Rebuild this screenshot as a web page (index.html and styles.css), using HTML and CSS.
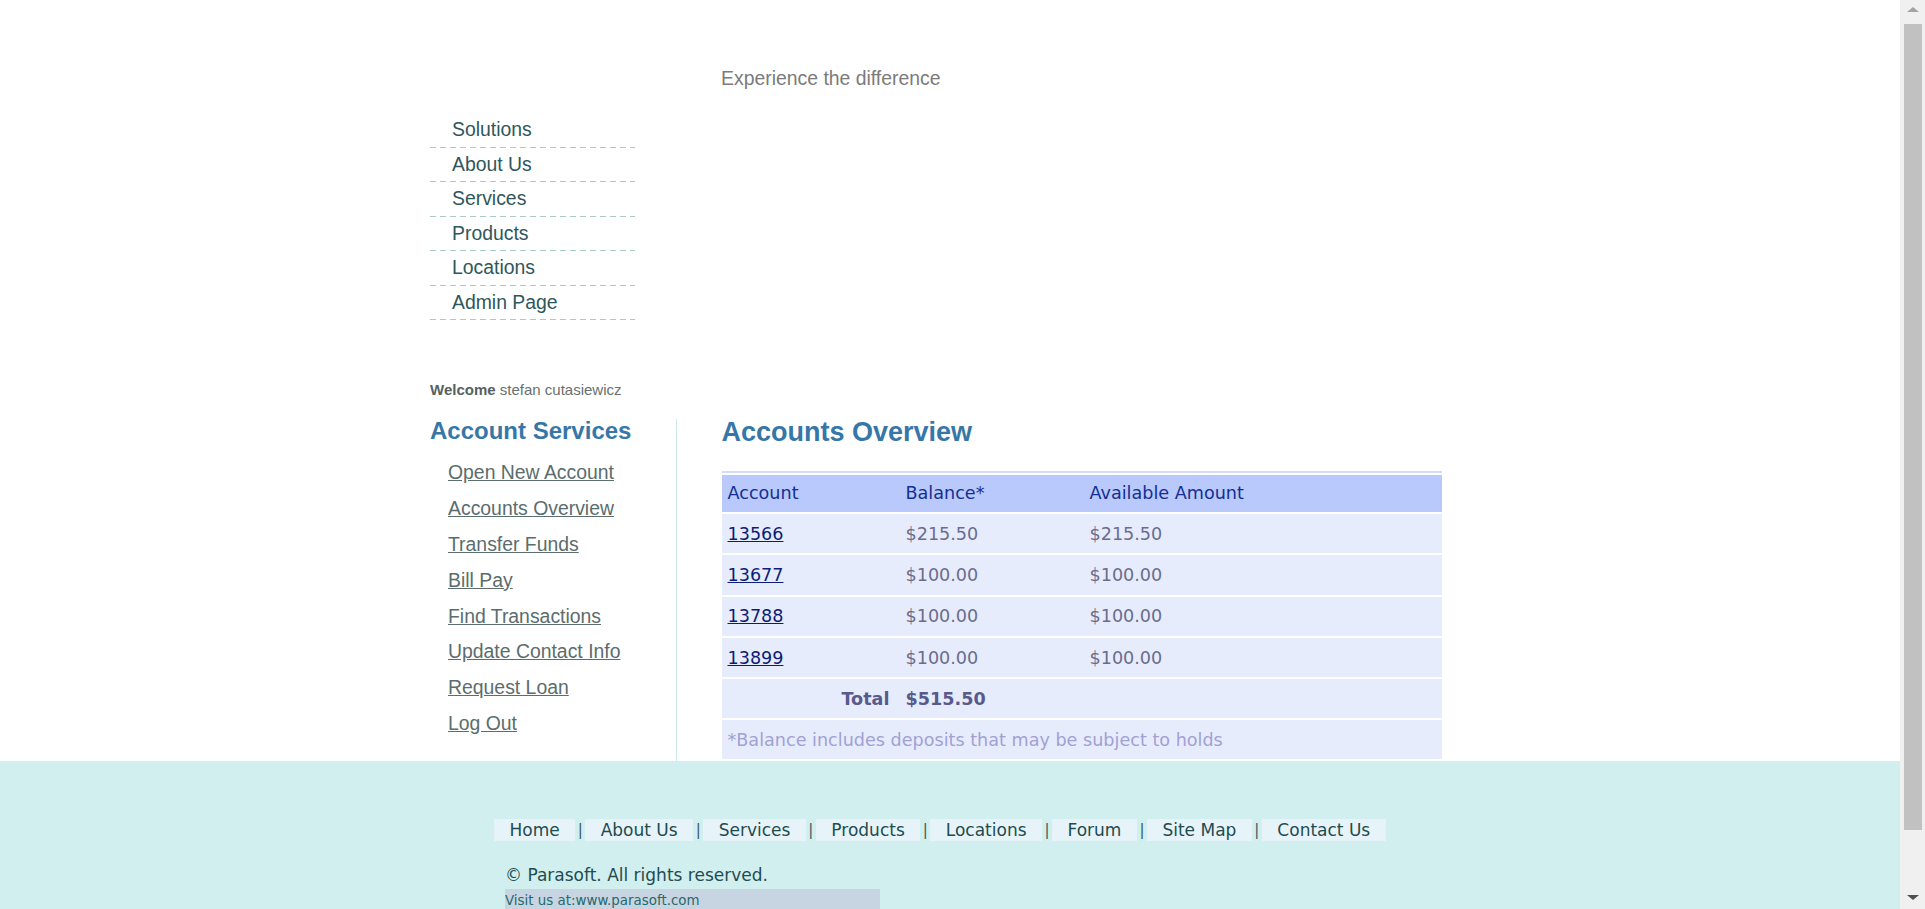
FILE: index.html
```html
<!DOCTYPE html>
<html>
<head>
<meta charset="utf-8">
<title>ParaBank | Accounts Overview</title>
<link rel="stylesheet" href="styles.css">
</head>
<body>
<div class="page">
  <div class="header">
    <p class="caption">Experience the difference</p>
  </div>
  <ul class="topnav">
    <li><a href="#">Solutions</a></li>
    <li><a href="#">About Us</a></li>
    <li><a href="#">Services</a></li>
    <li><a href="#">Products</a></li>
    <li><a href="#">Locations</a></li>
    <li><a href="#">Admin Page</a></li>
  </ul>
  <p class="welcome"><b>Welcome</b> stefan cutasiewicz</p>
  <div class="columns">
    <div class="leftcol">
      <h2 class="services-title">Account Services</h2>
      <ul class="services">
        <li><a href="#">Open New Account</a></li>
        <li><a href="#">Accounts Overview</a></li>
        <li><a href="#">Transfer Funds</a></li>
        <li><a href="#">Bill Pay</a></li>
        <li><a href="#">Find Transactions</a></li>
        <li><a href="#">Update Contact Info</a></li>
        <li><a href="#">Request Loan</a></li>
        <li><a href="#">Log Out</a></li>
      </ul>
    </div>
    <div class="rightcol">
      <h1 class="title">Accounts Overview</h1>
      <table class="accounts">
        <thead>
          <tr><th class="c1">Account</th><th class="c2">Balance*</th><th class="c3">Available Amount</th></tr>
        </thead>
        <tbody>
          <tr><td><a href="#">13566</a></td><td>$215.50</td><td>$215.50</td></tr>
          <tr><td><a href="#">13677</a></td><td>$100.00</td><td>$100.00</td></tr>
          <tr><td><a href="#">13788</a></td><td>$100.00</td><td>$100.00</td></tr>
          <tr><td><a href="#">13899</a></td><td>$100.00</td><td>$100.00</td></tr>
          <tr class="total"><td class="total-label">Total</td><td>$515.50</td><td></td></tr>
        </tbody>
        <tfoot>
          <tr><td colspan="3" class="note">*Balance includes deposits that may be subject to holds</td></tr>
        </tfoot>
      </table>
    </div>
  </div>
</div>
<div class="footer">
  <div class="footer-inner">
    <ul class="footer-links">
      <li><a href="#">Home</a></li><li class="sep">|</li>
      <li><a href="#">About Us</a></li><li class="sep">|</li>
      <li><a href="#">Services</a></li><li class="sep">|</li>
      <li><a href="#">Products</a></li><li class="sep">|</li>
      <li><a href="#">Locations</a></li><li class="sep">|</li>
      <li><a href="#">Forum</a></li><li class="sep">|</li>
      <li><a href="#">Site Map</a></li><li class="sep">|</li>
      <li><a href="#">Contact Us</a></li>
    </ul>
    <p class="copyright">© Parasoft. All rights reserved.</p>
    <p class="visit">Visit us at:www.parasoft.com</p>
  </div>
</div>
<div class="scrollbar" aria-hidden="true">
  <span class="arrow-up"></span>
  <span class="thumb"></span>
  <span class="arrow-down"></span>
</div>
</body>
</html>
```

FILE: styles.css
```css
html, body {
  margin: 0;
  padding: 0;
}
body {
  padding-right: 25px;
  font-family: "Liberation Sans", Arial, sans-serif;
  font-size: 19.4px;
  color: #333;
  background: #fff;
}
.page {
  width: 1040px;
  margin: 0 auto;
}
.header {
  height: 113px;
}
.caption {
  margin: 0;
  padding: 67px 0 0 291px;
  line-height: 23px;
  color: #7b7b7b;
}
.topnav {
  list-style: none;
  margin: 0;
  padding: 0;
  width: 205px;
}
.topnav li {
  height: 34.5px;
  line-height: 32px;
  padding-left: 22px;
  box-sizing: border-box;
  background: repeating-linear-gradient(to right, #a9cbc7 0 6px, transparent 6px 10px) left bottom / 100% 1px no-repeat;
}
.topnav a {
  color: #2f575b;
  text-decoration: none;
}
.welcome {
  margin: 61px 0 0 0;
  font-size: 15px;
  line-height: 17px;
  color: #66716f;
}
.welcome b {
  color: #55625f;
}
.columns {
  display: flex;
  margin-top: 20.5px;
}
.leftcol {
  width: 245.5px;
  border-right: 1.5px solid #cbe8e6;
  padding-bottom: 18px;
}
.services-title {
  margin: 0;
  font-size: 24px;
  line-height: 24px;
  color: #3677a8;
}
.services {
  list-style: none;
  margin: 12.5px 0 0 0;
  padding: 0 0 0 18px;
}
.services li {
  height: 35.9px;
  line-height: 35.9px;
}
.services a {
  color: #5b6d6d;
  text-decoration: underline;
}
.rightcol {
  padding-left: 45px;
  width: 720px;
}
.title {
  margin: 0;
  font-size: 27px;
  line-height: 27px;
  color: #3677a8;
}
.accounts {
  margin-top: 25px;
  width: 720px;
  border-collapse: separate;
  border-spacing: 0 2px;
  border-top: 2px solid #d3ddfb;
  font-family: "DejaVu Sans", Verdana, sans-serif;
  font-size: 17.6px;
}
.accounts th {
  background: #b9c9fb;
  color: #142f93;
  font-weight: normal;
  text-align: left;
  height: 37.5px;
  padding: 0 6px;
}
.accounts td {
  background: #e7ecfd;
  color: #6b6c8c;
  height: 39.3px;
  padding: 0 6px;
}
.accounts .c1 {
  width: 166px;
}
.accounts .c2 {
  width: 172px;
}
.accounts td a {
  color: #0c1d78;
}
.accounts .total td {
  height: 39px;
  font-weight: bold;
  color: #585a8c;
}
.accounts .total-label {
  text-align: right;
  padding-right: 10px;
}
.accounts .note {
  height: 39px;
  color: #a1a1d4;
}
.footer {
  background: #d2efef;
  height: 227px;
}
.footer-inner {
  width: 1040px;
  margin: 0 auto;
  box-sizing: border-box;
  padding: 58px 0 0 64px;
  font-family: "DejaVu Sans", Verdana, sans-serif;
}
.footer-links {
  list-style: none;
  margin: 0;
  padding: 0;
  display: flex;
  font-size: 17px;
  line-height: 22px;
}
.footer-links a {
  display: block;
  background: #e6f3f9;
  color: #1e4c4f;
  text-decoration: none;
  padding: 0 15.5px;
}
.footer-links .sep {
  width: 10px;
  text-align: center;
  color: #3d5a5c;
  font-size: 15px;
}
.copyright {
  margin: 23px 0 0 11px;
  font-size: 17px;
  line-height: 22px;
  color: #1e4c4f;
}
.visit {
  margin: 3px 0 0 11px;
  width: 375px;
  height: 40px;
  background: #c7d5e3;
  font-size: 13.4px;
  line-height: 24px;
  color: #26696b;
}
.scrollbar {
  position: fixed;
  top: 0;
  right: 0;
  width: 25px;
  height: 100%;
  background: #f0f0f0;
}
.thumb {
  position: absolute;
  left: 4px;
  right: 3px;
  top: 24px;
  height: 806px;
  background: #c1c1c1;
}
.arrow-up {
  position: absolute;
  top: 7px;
  left: 7px;
  width: 0;
  height: 0;
  border-left: 6px solid transparent;
  border-right: 6px solid transparent;
  border-bottom: 5px solid #a3a3a3;
}
.arrow-down {
  position: absolute;
  bottom: 9px;
  left: 7px;
  width: 0;
  height: 0;
  border-left: 6px solid transparent;
  border-right: 6px solid transparent;
  border-top: 5px solid #505050;
}
```
